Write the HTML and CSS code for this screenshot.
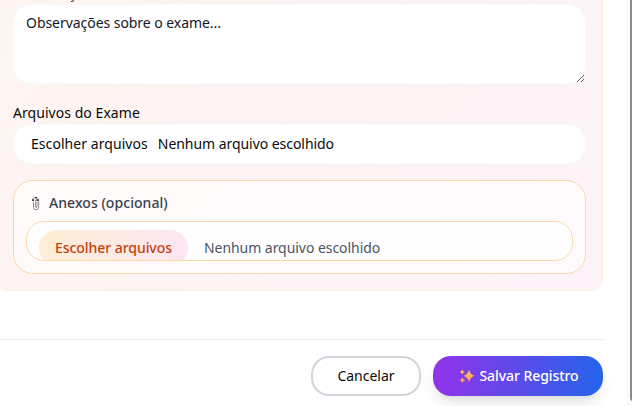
FILE: index.html
```html
<!DOCTYPE html>
<html lang="pt-BR">
<head>
<meta charset="utf-8">
<title>Registro de exame</title>
<link rel="stylesheet" href="styles.css">
</head>
<body>
<main class="dialog">
  <div class="content">
    <section class="card">
      <label class="label" for="obs">Observações</label>
      <textarea class="textarea" id="obs" placeholder="Observações sobre o exame..."></textarea>
      <div class="label files-label">Arquivos do Exame</div>
      <div class="file-input"><span class="choose">Escolher arquivos</span><span class="status">Nenhum arquivo escolhido</span></div>
      <div class="attachments">
        <div class="attachments-title">
          <svg class="clip" viewBox="0 0 10 15" fill="none" stroke="#77747c" stroke-width=".8">
            <path d="M2.500 6v5.200a2.600 2.600 0 0 0 5.200 0V4.800a1.600 1.600 0 0 0-3.100 0v6a.7.7 0 0 0 1.400 0V6"/>
            <path d="M1.300 4.500 2.500 2l3-.8L7.400 3v2" stroke="#8a8588"/>
            <path d="M1.200 3.300h1.900v1.800H1.200zM4 1h1.800v1.500H4zM5.600 3.200h1.800v1.700H5.600z" fill="#3b3034" stroke="none"/>
          </svg>
          <span>Anexos (opcional)</span>
        </div>
        <div class="attachment-input"><span class="pill">Escolher arquivos</span><span class="status">Nenhum arquivo escolhido</span></div>
      </div>
    </section>
    <footer class="actions">
      <button class="btn cancel">Cancelar</button>
      <button class="btn save">
        <svg class="sparkles" viewBox="0 0 16 16">
          <defs><linearGradient id="gold" x1="0" y1="0" x2="0" y2="1"><stop offset="0" stop-color="#ffc35a"/><stop offset="1" stop-color="#f79b62"/></linearGradient></defs>
          <path fill="url(#gold)" d="M10 1.800Q11.300 6.700 15.600 8 11.300 9.300 10 14.200 8.700 9.300 4.400 8 8.700 6.700 10 1.800z"/>
          <path fill="#ffb65e" d="M3.300 1.500Q4 3.400 5.800 4 4 4.600 3.300 6.500 2.600 4.600.8 4 2.600 3.400 3.300 1.500z"/>
          <path fill="#f7a06b" d="M3.500 9.500Q4.200 11.700 6.300 12.300 4.200 12.900 3.500 15 2.800 12.900.7 12.300 2.800 11.700 3.500 9.500z"/>
        </svg>
        <span>Salvar Registro</span>
      </button>
    </footer>
  </div>
  <div class="scrollbar"><div class="thumb"></div></div>
</main>
</body>
</html>
```
FILE: styles.css
```css
* {
  box-sizing: border-box;
}

body {
  margin: 0;
  overflow: hidden;
  background: #fff;
  color: #0a0a0a;
  font: 14px/20px "Noto Sans", sans-serif;
}

.dialog {
  display: flex;
  justify-content: space-between;
  height: 406px;
  overflow: hidden;
}

.content {
  display: flex;
  flex-direction: column;
  flex: none;
  justify-content: flex-end;
  width: 607px;
  height: 406px;
  margin-left: -4px;
}

.card {
  display: flex;
  flex: none;
  flex-direction: column;
  justify-content: flex-end;
  height: 600px;
  padding: 16px;
  border: 1px solid #ffedd5;
  border-radius: 12px;
  background: linear-gradient(to bottom right, #fff7ed, #fef3f2, #fdf2f8);
}

.label {
  height: 14px;
  margin-bottom: 4px;
  letter-spacing: .05px;
  line-height: 14px;
}

.files-label {
  margin: 22px 0 4px;
}

.textarea {
  display: block;
  flex: none;
  width: 100%;
  height: 80px;
  padding: 8px 12px;
  border: 1px solid #f8fafc;
  border-radius: 18px;
  outline: 0;
  background: #fff;
  font: inherit;
  letter-spacing: -.05px;
  resize: vertical;
}

.textarea::placeholder {
  color: #111827;
  opacity: 1;
}

.file-input {
  display: flex;
  gap: 10px;
  align-items: center;
  flex: none;
  height: 40px;
  padding: 0 17px;
  border: 1px solid #f8fafc;
  border-radius: 18px;
  background: #fff;
}

.choose {
  letter-spacing: .06px;
}

.status {
  letter-spacing: -.05px;
}

.attachments {
  flex: none;
  height: 94px;
  margin-top: 16px;
  padding: 12px;
  border: 1px solid #fed7aa;
  border-radius: 20px;
  background: rgba(255, 255, 255, .6);
}

.attachments-title {
  display: flex;
  gap: 8px;
  align-items: center;
  height: 20px;
  margin-bottom: 8px;
  padding-left: 5px;
  color: #374151;
  font-weight: 500;
  letter-spacing: .06px;
}

.clip {
  width: 10px;
  height: 15px;
}

.attachment-input {
  display: flex;
  gap: 16px;
  height: 40px;
  padding: 8px 12px;
  overflow: hidden;
  border: 1px solid #fed7aa;
  border-radius: 18px;
  background: rgba(255, 255, 255, .8);
  color: #4b5563;
  line-height: 36px;
}

.pill {
  flex: none;
  height: 36px;
  padding: 0 16px;
  border-radius: 18px;
  background: linear-gradient(to right, #ffedd5, #fce7f3);
  color: #c2410c;
  font-weight: 500;
  letter-spacing: -.05px;
}

.actions {
  display: flex;
  flex: none;
  gap: 12px;
  justify-content: flex-end;
  height: 67px;
  margin-top: 48px;
  padding-top: 16px;
  border-top: 1px solid #e5e7eb;
}

.btn {
  display: flex;
  align-items: center;
  justify-content: center;
  gap: 4px;
  height: 40px;
  padding: 0;
  border: 0;
  border-radius: 18px;
  font: inherit;
}

.cancel {
  width: 110px;
  border: 2px solid #d1d5db;
  background: #fff;
  color: #0a0a0a;
}

.save {
  width: 170px;
  padding-left: 2px;
  background: linear-gradient(to right, #9333ea, #2563eb);
  box-shadow: 0 10px 15px -3px rgba(0, 0, 0, .1), 0 4px 6px -4px rgba(0, 0, 0, .1);
  color: #fff;
  font-weight: 500;
  letter-spacing: -.06px;
}

.sparkles {
  width: 16px;
  height: 16px;
}

.scrollbar {
  flex: none;
  width: 5px;
  padding-left: 3px;
  background: #fafafa;
}

.thumb {
  width: 8px;
  height: 401px;
  border-radius: 0 0 0 3px;
  background: #8b8b8b;
}
```
